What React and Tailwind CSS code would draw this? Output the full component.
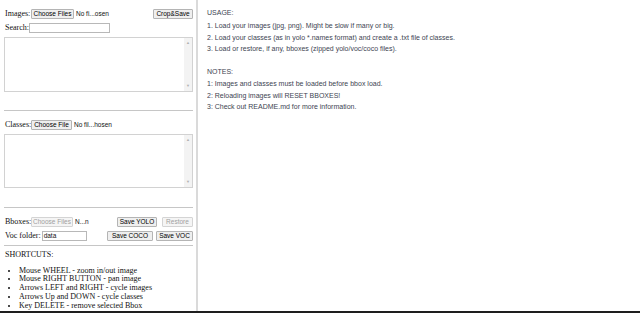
import React from 'react';

const sans = "font-['Liberation_Sans',Arial,sans-serif]";
const serif = "font-['Liberation_Serif','Times_New_Roman',serif]";

const Btn = ({ children, w, disabled }) => (
  <button
    disabled={disabled}
    className={`${sans} ${w} h-[10px] shrink-0 flex items-center justify-center whitespace-nowrap text-[6.5px] leading-none border rounded-[1px] ${
      disabled
        ? 'bg-[#f5f5f5] border-[#d4d4d4] text-[#a0a0a0]'
        : 'bg-[#efefef] border-[#b4b4b4] text-black'
    }`}
  >
    {children}
  </button>
);

const FakeTextarea = ({ h }) => (
  <div className={`${h} w-full flex border border-[#d2d2d2] bg-white`}>
    <div className="flex-1" />
    {/* scrollbar */}
    <div className="w-[8px] bg-[#f3f3f3] flex flex-col items-center justify-between py-[3px] text-[#b0b0b0] text-[4px] leading-none">
      <span>▲</span>
      <span>▼</span>
    </div>
  </div>
);

const Rule = () => <div className="h-px w-full bg-[#c6c6c6]" />;

const Label = ({ children, w }) => (
  <span className={`pl-px ${w} shrink-0 whitespace-nowrap`}>{children}</span>
);

const shortcuts = [
  'Mouse WHEEL - zoom in/out image',
  'Mouse RIGHT BUTTON - pan image',
  'Arrows LEFT and RIGHT - cycle images',
  'Arrows Up and DOWN - cycle classes',
  'Key DELETE - remove selected Bbox',
];

export default function App() {
  return (
    <div className="w-[640px] h-[313px] flex flex-col bg-white overflow-hidden">
      <div className="flex-1 flex min-h-0">
        {/* Left panel */}
        <div className={`${serif} w-[198px] shrink-0 border-r-2 border-[#dadada] pl-[4px] pr-[3px] pt-[9px] text-[8px] text-[#111]`}>
          {/* Images row */}
          <div className="h-[10px] flex items-center">
            <Label w="w-[27px]">Images:</Label>
            <Btn w="w-[43px]">Choose Files</Btn>
            <span className={`${sans} text-[6.5px] ml-[2px] whitespace-nowrap`}>No fi...osen</span>
            <div className="flex-1" />
            <Btn w="w-[40px]">Crop&amp;Save</Btn>
          </div>

          {/* Search */}
          <div className="mt-[4px] h-[10px] flex items-center">
            <Label w="w-[25px]">Search:</Label>
            <div className="w-[81px] h-[10px] border border-[#b8b8b8] bg-white" />
          </div>

          <div className="mt-[4px]">
            <FakeTextarea h="h-[55px]" />
          </div>

          <div className="mt-[18px]">
            <Rule />
          </div>

          {/* Classes */}
          <div className="mt-[9px] h-[10px] flex items-center">
            <Label w="w-[27px]">Classes:</Label>
            <Btn w="w-[41px]">Choose File</Btn>
            <span className={`${sans} text-[6.5px] ml-[2px] whitespace-nowrap`}>No fil...hosen</span>
          </div>

          <div className="mt-[4px]">
            <FakeTextarea h="h-[54px]" />
          </div>

          <div className="mt-[19px]">
            <Rule />
          </div>

          {/* Bboxes */}
          <div className="mt-[9px] h-[10px] flex items-center">
            <Label w="w-[27px]">Bboxes:</Label>
            <Btn w="w-[42px]" disabled>Choose Files</Btn>
            <span className={`${sans} text-[6.5px] ml-[2px] whitespace-nowrap`}>N...n</span>
            <div className="flex-1" />
            <Btn w="w-[40px]">Save YOLO</Btn>
            <div className="w-[5px]" />
            <Btn w="w-[31px]" disabled>Restore</Btn>
          </div>

          {/* Voc folder */}
          <div className="mt-[4px] h-[10px] flex items-center">
            <span className="pl-px mr-[1px] shrink-0 whitespace-nowrap">Voc folder:</span>
            <div className={`${sans} w-[45px] h-[10px] shrink-0 border border-[#b8b8b8] bg-white text-[6.5px] leading-[8px] pl-[1px]`}>
              data
            </div>
            <div className="flex-1" />
            <Btn w="w-[46px]">Save COCO</Btn>
            <div className="w-[3px]" />
            <Btn w="w-[37px]">Save VOC</Btn>
          </div>

          <div className="mt-[4px]">
            <Rule />
          </div>

          {/* Shortcuts */}
          <div className="mt-[4px] leading-[9px] pl-px">SHORTCUTS:</div>
          <ul className="mt-[7.5px] list-disc pl-[15px] leading-[8.8px]">
            {shortcuts.map((s) => (
              <li key={s}>{s}</li>
            ))}
          </ul>
        </div>

        {/* Right panel */}
        <div className={`${sans} flex-1 pl-[9px] pt-[6.5px] text-[7px] leading-[11.3px] text-[#3d4452]`}>
          <div className="mb-[2.5px]">USAGE:</div>
          <div>1. Load your images (jpg, png). Might be slow if many or big.</div>
          <div>2. Load your classes (as in yolo *.names format) and create a .txt file of classes.</div>
          <div>3. Load or restore, if any, bboxes (zipped yolo/voc/coco files).</div>
          <div className="h-[12px]" />
          <div className="mb-[1px]">NOTES:</div>
          <div>1: Images and classes must be loaded before bbox load.</div>
          <div>2: Reloading images will RESET BBOXES!</div>
          <div>3: Check out README.md for more information.</div>
        </div>
      </div>
      <div className="h-[2px] bg-[#1e1e1e]" />
    </div>
  );
}
